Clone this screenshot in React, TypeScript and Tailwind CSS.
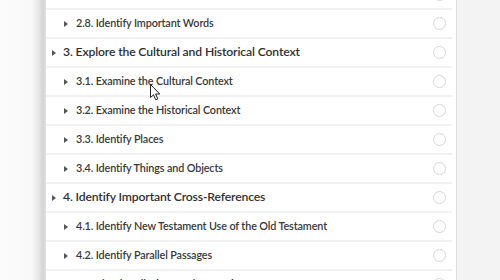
import React from "react";

type Row = { label: string; level: 0 | 1 };

const rows: Row[] = [
  { label: "2.7. Analyze the Grammar and Syntax", level: 1 },
  { label: "2.8. Identify Important Words", level: 1 },
  { label: "3. Explore the Cultural and Historical Context", level: 0 },
  { label: "3.1. Examine the Cultural Context", level: 1 },
  { label: "3.2. Examine the Historical Context", level: 1 },
  { label: "3.3. Identify Places", level: 1 },
  { label: "3.4. Identify Things and Objects", level: 1 },
  { label: "4. Identify Important Cross-References", level: 0 },
  { label: "4.1. Identify New Testament Use of the Old Testament", level: 1 },
  { label: "4.2. Identify Parallel Passages", level: 1 },
  { label: "4.3. Identify Allusions and Quotations", level: 1 },
];

function Triangle() {
  return (
    <svg width="4" height="6" viewBox="0 0 4 6" className="shrink-0">
      <path d="M0 0 L4 3 L0 6 Z" fill="#555" />
    </svg>
  );
}

function Cursor() {
  return (
    <svg
      width="11"
      height="17"
      viewBox="0 0 11 17"
      className="absolute left-[150px] top-[84px] pointer-events-none"
    >
      <path
        d="M0.5 0.5 L0.5 13.5 L3.5 10.8 L5.8 15.8 L7.8 14.9 L5.6 10 L9.8 10 Z"
        fill="#fff"
        stroke="#222"
        strokeWidth="1"
        strokeLinejoin="round"
      />
    </svg>
  );
}

export default function App() {
  return (
    <div
      className="relative flex w-[500px] h-[280px] overflow-hidden bg-[#f3f3f3]"
      style={{ fontFamily: 'Lato, "Open Sans", sans-serif' }}
    >
      <div className="w-[46px] shrink-0 bg-[linear-gradient(to_right,#fbfbfb_0px,#f8f8f8_32px,#e6e6e6_39px,#d3d3d3_43px,#e2e2e2_46px)]" />
      <div className="w-[411px] shrink-0 bg-white border-r border-[#dedede] pr-[4px]">
        <div className="mt-[-19px] flex flex-col">
          {rows.map((r, i) => (
            <div
              key={i}
              className={
                "flex items-center h-[29px] border-b-2 border-[#f1f1f1] " +
                (r.level === 0 ? "pl-[6px]" : "pl-[18px]")
              }
            >
              <Triangle />
              <span
                className={
                  r.level === 0
                    ? "ml-[7px] text-[12.2px] tracking-[-0.15px] font-semibold text-[#2f2f2f] whitespace-nowrap"
                    : "ml-[8px] text-[10.8px] tracking-[-0.12px] font-semibold text-[#383838] whitespace-nowrap"
                }
              >
                {r.label}
              </span>
              <div className="ml-auto mr-[6px] w-[13px] h-[13px] rounded-full border-[1.5px] border-[#d6d6d6]" />
            </div>
          ))}
        </div>
      </div>
      <div className="flex-1" />
      <Cursor />
    </div>
  );
}
